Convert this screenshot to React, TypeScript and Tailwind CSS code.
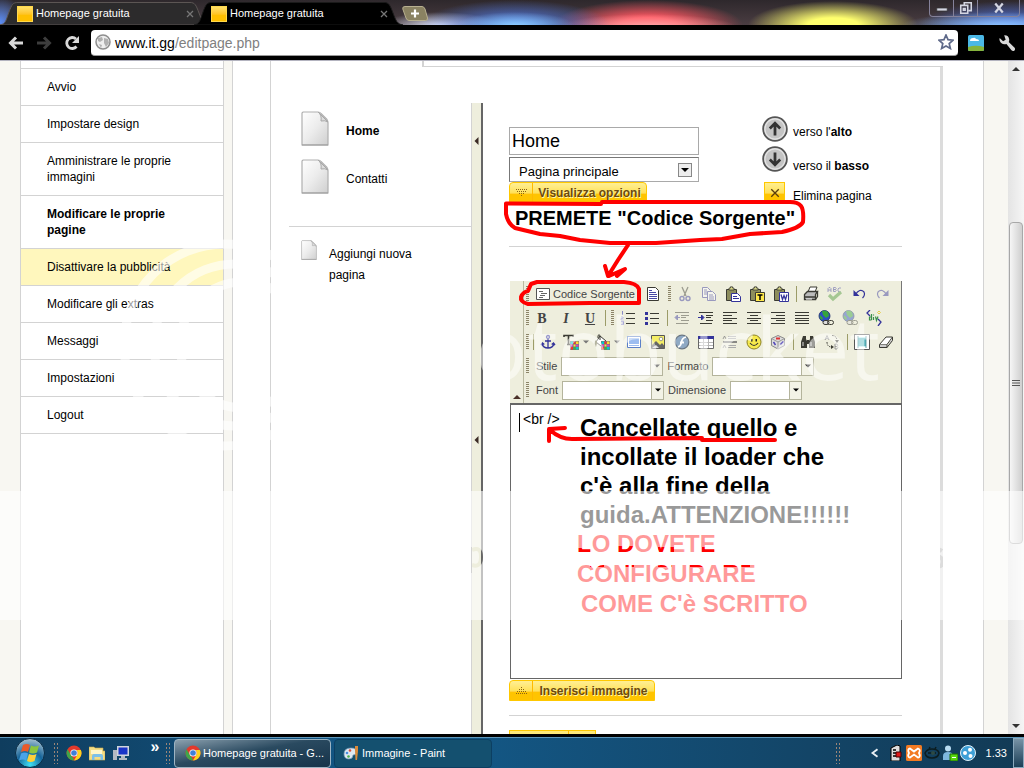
import type { ReactNode } from 'react';

const DARK = '#3a3a33';
const NAVY = '#33339a';

function Svg({ size = 'size-4', children }: { size?: string; children: ReactNode }) {
  return (
    <svg viewBox="0 0 16 16" className={`${size} shrink-0`} fill="none" aria-hidden="true">
      {children}
    </svg>
  );
}

/* ---------- browser chrome ---------- */

function Tab({ title, active = false }: { title: string; active?: boolean }) {
  return (
    <div className="relative flex h-full w-[194px] items-center gap-[3px] pl-[9px] pr-1 pt-0.5">
      <svg viewBox="0 0 210 25" className="absolute left-[-8px] top-0 h-[25px] w-[210px]" aria-hidden="true">
        <path
          d="M0 25 C6 24 6 20 9 12 C12 4 13 2.500 18 2.500 H190 C195 2.500 196 5 199 13 C202 21 203 24 209 25 Z"
          fill={active ? '#000' : '#2c2b2c'}
          stroke={active ? '#1a1a1a' : '#5c5654'}
        />
      </svg>
      <span className="relative size-4 shrink-0 border border-[#ffd84d] bg-linear-to-b from-[#ffe066] to-[#ffbf00] to-60%" />
      <button className="relative flex-1 text-left text-[11px] text-white">{title}</button>
      <button className="relative flex size-4 items-center justify-center" aria-label="Chiudi scheda">
        <Svg size="size-2">
          <path d="M2 2l12 12M14 2L2 14" stroke="#777" strokeWidth="2.500" />
        </Svg>
      </button>
    </div>
  );
}

function TabStrip() {
  return (
    <div className="flex h-[25px] shrink-0 items-start overflow-hidden bg-[radial-gradient(ellipse_60px_14px_at_515px_26px,#8fd0ff,transparent),radial-gradient(ellipse_95px_25px_at_515px_25px,#4d7df0,transparent),radial-gradient(ellipse_60px_14px_at_440px_26px,#e8ecff,transparent),radial-gradient(ellipse_90px_14px_at_648px_28px,#ffb0b0,transparent),radial-gradient(ellipse_95px_25px_at_648px_25px,#ff5560_30%,transparent),radial-gradient(ellipse_85px_24px_at_833px_25px,#ffff6e_30%,transparent),radial-gradient(ellipse_100px_14px_at_1000px_26px,#8fc4ff,transparent),radial-gradient(ellipse_90px_24px_at_1010px_25px,#4a74e8,transparent),radial-gradient(ellipse_24px_26px_at_0px_22px,#5b8df5,transparent),linear-gradient(#2e282c,#4a3d42)]">
      <div className="flex h-full pl-2">
        <Tab title="Homepage gratuita" />
        <Tab title="Homepage gratuita" active />
      </div>
      <button className="ml-1.5 mt-1.5" aria-label="Nuova scheda">
        <svg viewBox="0 0 26 15" className="h-[15px] w-[26px]" aria-hidden="true">
          <path d="M3 .5H20Q22 .5 23 3L25.500 12Q26 14.500 23.500 14.500H7Q5 14.500 4 12L.8 3Q.2 .5 3 .5Z" fill="#8a8262" stroke="#b8b090" />
          <path d="M13 3.500v8M9 7.500h8" stroke="#fff" strokeWidth="2.200" />
        </svg>
      </button>
      <div className="ml-auto mr-1 flex h-[17px] rounded-b-sm border border-t-0 border-[#85829a] text-[#d4d6e2]">
        <button className="flex w-6 items-center justify-center border-r border-[#85829a]" aria-label="Riduci">
          <Svg size="size-3"><path d="M1 8h14v4H1z" fill="currentColor" stroke="#333" /></Svg>
        </button>
        <button className="flex w-6 items-center justify-center border-r border-[#85829a]" aria-label="Ripristina">
          <Svg size="size-3.5"><path d="M6 5V2h8v9h-3M2 5h8v9H2zM5 8.500h2v2H5z" stroke="currentColor" strokeWidth="1.800" /></Svg>
        </button>
        <button className="flex w-[41px] items-center justify-center" aria-label="Chiudi">
          <Svg size="size-3"><path d="M3 2l10 12M13 2L3 14" stroke="currentColor" strokeWidth="3" /></Svg>
        </button>
      </div>
    </div>
  );
}

function AddressBar() {
  return (
    <div className="flex h-9 shrink-0 items-center border-b border-[#b3b3bf] bg-black pl-2 pr-2 text-[#d8d8d8]">
      <button aria-label="Indietro">
        <Svg><path d="M15 8H3M8 2.500L2.500 8L8 13.500" stroke="currentColor" strokeWidth="3" /></Svg>
      </button>
      <button className="ml-3 text-[#3d3d3d]" aria-label="Avanti">
        <Svg><path d="M1 8H13M8 2.500L13.500 8L8 13.500" stroke="currentColor" strokeWidth="3" /></Svg>
      </button>
      <button className="ml-3" aria-label="Ricarica">
        <Svg>
          <path d="M12.500 11.500A5.500 5.500 0 1 1 12 4" stroke="currentColor" strokeWidth="2.800" />
          <path d="M15 1v7H8z" fill="currentColor" />
        </Svg>
      </button>
      <div className="ml-[11px] flex h-[26px] flex-1 items-center rounded-sm border-b border-[#999] bg-white pl-1 pr-1">
        <Svg>
          <circle cx="8" cy="8" r="7" fill="#eee" stroke="#8e8e8e" strokeWidth="1.500" />
          <path d="M3 4l4-1 1 3-3 2-2-1zM9 4l4 1 1 4-3 4-2-4zM4 10l3 1-1 3z" fill="#b0b0b0" />
        </Svg>
        <div className="ml-1 flex-1 pt-0.5 text-[14px] text-[#808080]">
          <span className="text-black">www.it.gg</span>/editpage.php
        </div>
        <button aria-label="Aggiungi ai preferiti">
          <Svg><path d="M8 1l2 4.700 5 .5-3.800 3.300 1.200 5L8 12l-4.400 2.500 1.200-5L1 6.200l5-.5z" stroke="#5f6a8a" strokeWidth="1.700" /></Svg>
        </button>
      </div>
      <button className="ml-[10px]" aria-label="Estensione">
        <Svg>
          <rect width="16" height="16" rx="1.500" fill="#4bb8e6" />
          <path d="M2 6q0-3 3-3 2-1 3 1 3 0 3 2z" fill="#fff" />
          <path d="M0 12q8-2.500 16 0v2.500q0 1.500-1.500 1.500h-13Q0 16 0 14.500z" fill="#86b43c" />
        </Svg>
      </button>
      <button className="ml-3.5" aria-label="Impostazioni del browser">
        <Svg size="size-[18px]">
          <path d="M1.500 3.500L4.500 6.500L6.800 5L5.500 1.200Q9.500 1 10 5Q10 6.500 9.500 7L15 12.500Q15.500 14 14.500 14.800Q13 15.500 12 14.500L7.500 8.800Q3 9.800 1.500 6Q1 4.500 1.500 3.500Z" fill="currentColor" />
        </Svg>
      </button>
    </div>
  );
}

/* ---------- site navigation ---------- */

const NAV = [
  { label: 'Avvio' },
  { label: 'Impostare design' },
  { label: 'Amministrare le proprie immagini' },
  { label: 'Modificare le proprie pagine', style: 'font-bold' },
  { label: 'Disattivare la pubblicità', style: 'bg-[#fff7bd]' },
  { label: 'Modificare gli extras' },
  { label: 'Messaggi' },
  { label: 'Impostazioni' },
  { label: 'Logout' },
];

function Sidebar() {
  return (
    <nav className="w-[204px] shrink-0 border-x border-[#d3d3d3] bg-white">
      <ul className="mt-[7px] border-t border-[#d3d3d3]">
        {NAV.map((item) => (
          <li key={item.label} className="border-b border-[#d3d3d3]">
            <a href="#" className={`block py-2.5 pl-[26px] pr-8 leading-4 ${item.style ?? ''}`}>
              {item.label}
            </a>
          </li>
        ))}
      </ul>
    </nav>
  );
}

function PageIcon({ className }: { className: string }) {
  return (
    <svg viewBox="0 0 28 35" className={`${className} shrink-0`} aria-hidden="true">
      <defs>
        <linearGradient id="sheet" x1="0" y1="0" x2="1" y2="1">
          <stop offset="0" stopColor="#fff" />
          <stop offset=".5" stopColor="#ececec" />
          <stop offset="1" stopColor="#cfcfcf" />
        </linearGradient>
      </defs>
      <path d="M2 1H17Q19 1 20 2.500L26 8.500Q27 10 27 11.500V34H1V2Z" fill="url(#sheet)" stroke="#b0b0b0" strokeWidth="1.200" />
      <path d="M17 1Q21 4 20 10Q24 9 27 11Z" fill="#dcdcdc" stroke="#a8a8a8" />
      <path d="M1 34H27" stroke="#999" />
    </svg>
  );
}

function PageList() {
  return (
    <div className="w-[200px] shrink-0 pl-[18px] pt-11">
      <ul className="flex flex-col gap-[13px] pl-3">
        <li className="flex h-[35px] items-center gap-[17px]">
          <PageIcon className="h-[35px] w-7" />
          <a href="#" className="pt-1 font-bold">Home</a>
        </li>
        <li className="flex h-[35px] items-center gap-[17px]">
          <PageIcon className="h-[35px] w-7" />
          <a href="#" className="pt-1">Contatti</a>
        </li>
      </ul>
      <hr className="mt-8 border-[#d3d3d3]" />
      <a href="#" className="mt-[13px] flex gap-3 pl-3 leading-[21px]">
        <PageIcon className="h-5 w-4" />
        <span className="w-24 pt-1">Aggiungi nuova pagina</span>
      </a>
    </div>
  );
}

/* ---------- page form ---------- */

function YellowButton({ icon, label, width }: { icon: 'down' | 'up'; label: string; width: string }) {
  return (
    <button className={`flex h-[21px] rounded-t-sm border border-[#ffc800] bg-linear-to-b from-[#ffee8f] from-5% via-[#ffe25a] via-50% to-[#ffc400] to-60% ${width}`}>
      <span className="flex h-full w-[23px] items-center justify-center border-r border-[#ffb900]">
        <svg viewBox="0 0 11 8" className="h-2 w-[11px]" shapeRendering="crispEdges" aria-hidden="true">
          <path
            d={icon === 'down' ? 'M0 .5h11M1 2.500h9M3 4.500h5M5 6.500h1' : 'M5 .5h1M3 2.500h5M1 4.500h9M0 6.500h11'}
            stroke="#8a6414"
            strokeDasharray="1 1"
          />
        </svg>
      </span>
      <span className="flex-1 text-center text-[12px] font-bold leading-[21px] text-[#6b4a10] text-shadow-[1px_1px_0_#fff3a8]">{label}</span>
    </button>
  );
}

function RoundArrow({ down = false }: { down?: boolean }) {
  return (
    <Svg size="size-[26px]">
      <circle cx="8" cy="8" r="7.300" fill="#c4c4c4" stroke="#555" strokeWidth="1.100" />
      <circle cx="8" cy="8" r="6.200" stroke="#e4e4e4" strokeWidth=".7" />
      <path d={down ? 'M8 4v7.500M4.800 8.300L8 11.500l3.200-3.200' : 'M8 12V4.500M4.800 7.700L8 4.500l3.200 3.200'} stroke="#333" strokeWidth="1.700" />
    </Svg>
  );
}

function PageForm() {
  return (
    <div className="flex justify-between">
      <div className="w-[190px] pt-[11px]">
        <input
          aria-label="Nome della pagina"
          defaultValue="Home"
          className="block h-7 w-full border border-[#a9a9a9] px-0.5 text-[18px]"
        />
        <div className="relative mt-0.5">
          <select
            aria-label="Tipo di pagina"
            className="block h-[25px] w-full appearance-none border border-[#a9a9a9] border-l-[#777] border-t-[#777] bg-white pl-[9px] pt-1 text-[13px]"
          >
            <option>Pagina principale</option>
          </select>
          <span className="pointer-events-none absolute right-[7px] top-1.5 flex size-3.5 items-center justify-center border border-[#888] bg-[#eee]">
            <Svg size="size-2"><path d="M0 4h16L8 12z" fill="#000" /></Svg>
          </span>
        </div>
        <YellowButton icon="down" label="Visualizza opzioni" width="w-[138px]" />
      </div>
      <div className="flex w-[140px] flex-col leading-5">
        <button className="flex h-[26px] items-end gap-[5px]">
          <RoundArrow />
          <span>verso l'<b>alto</b></span>
        </button>
        <button className="mt-1 flex h-[30px] gap-[5px]">
          <RoundArrow down />
          <span className="self-end">verso il <b>basso</b></span>
        </button>
        <button className="mt-1.5 flex h-6 gap-2 pl-0.5">
          <span className="flex h-[21px] w-[21px] items-center justify-center border border-[#ffc800] bg-linear-to-b from-[#ffee8f] via-[#ffe25a] via-50% to-[#ffc400] to-60%">
            <Svg size="size-2.5"><path d="M2 2l12 12M14 2L2 14" stroke="#5a3d0c" strokeWidth="2.200" /></Svg>
          </span>
          <span className="self-end">Elimina pagina</span>
        </button>
      </div>
    </div>
  );
}

/* ---------- editor toolbar ---------- */

function Grip({ wide = false }: { wide?: boolean }) {
  return (
    <span className={`flex shrink-0 justify-center ${wide ? 'w-2' : 'w-1.5'}`}>
      <span className="h-4 w-[3px] bg-[repeating-linear-gradient(#8c8468_0_1px,#eeeedd_1px_2px)]" />
    </span>
  );
}

function Sep() {
  return (
    <span className="flex w-1.5 shrink-0 justify-center">
      <span className="h-4 w-px bg-[#9c9c68]" />
    </span>
  );
}

function Tool({ label, wide = false, dim = false, children }: { label: string; wide?: boolean; dim?: boolean; children: ReactNode }) {
  return (
    <button
      aria-label={label}
      className={`flex h-6 shrink-0 items-center justify-center ${wide ? 'w-[31px] gap-1' : 'w-6'} ${dim ? 'opacity-45' : ''}`}
    >
      <Svg>{children}</Svg>
      {wide && <Svg size="size-1.5"><path d="M0 4h16L8 12z" fill="#777" /></Svg>}
    </button>
  );
}

function Combo({ label, width, dim = false }: { label: string; width: string; dim?: boolean }) {
  return (
    <label className="flex items-center gap-1 text-[#444]">
      {label}
      <span className={`relative block ${width}`}>
        <select className="block h-[19px] w-full appearance-none border border-[#b4b49c] bg-white">
          <option></option>
        </select>
        <span className="pointer-events-none absolute bottom-px right-px top-px flex w-3 items-center justify-center border-l border-[#b4b49c] bg-[#f3f3e6]">
          <Svg size="size-1.5"><path d="M0 4h16L8 12z" fill={dim ? '#888' : '#000'} /></Svg>
        </span>
      </span>
    </label>
  );
}

const Clipboard = () => (
  <>
    <path d="M1.500 3.500h10v11h-10z" fill="#8d8d5c" stroke={DARK} />
    <path d="M4 4V2h1.500V.8h2V2H9v2z" fill="#d8d888" stroke={DARK} strokeWidth=".8" />
  </>
);

const Globe = () => (
  <>
    <circle cx="6.500" cy="6" r="5.500" fill="#2d4fc4" stroke="#1c2b66" strokeWidth=".8" />
    <path d="M4 1q4-1 6 1l1 4-3 2-3-3zM2 5l3 3-1 2q-3-2-2-5z" fill="#35a53c" />
    <rect x="5" y="10.500" width="6" height="4" rx="2" fill="#ddd" stroke={DARK} />
    <rect x="9.500" y="10.500" width="6" height="4" rx="2" stroke={DARK} />
  </>
);

const Swatches = () => (
  <>
    <path d="M7 7h9v9H7z" fill="#777" />
    <path d="M7.500 7.500h2.500v2.500H7.500zM13 13h2.500v2.500H13z" fill="#0cc" />
    <path d="M10.500 7.500h2v2.500h-2zM7.500 13h2.500v2.500H7.500z" fill="#e33" />
    <path d="M13 7.500h2.500v2.500H13zM10.500 10.500h2v2h-2z" fill="#fd3" />
    <path d="M7.500 10.500h2.500v2H7.500zM13 10.500h2.500v2H13z" fill="#c4c" />
    <path d="M10.500 13h2v2.500h-2z" fill="#3b4" />
  </>
);

function EditorToolbar() {
  return (
    <div className="flex h-[122px] overflow-hidden border-r border-[#777] bg-[#eeeedd] text-[11px]">
      <button aria-label="Comprimi la barra" className="flex w-[14px] shrink-0 items-end justify-center border-r border-[#b9b9a0] pb-0.5">
        <Svg size="size-2"><path d="M0 12h16L8 4z" fill="#4a3028" /></Svg>
      </button>
      <div className="flex flex-1 flex-col pt-px">
        <div className="flex h-6 items-center">
          <Grip />
          <button className="flex h-6 w-[111px] items-center gap-0.5 pl-[5px] text-[#444]">
            <Svg>
              <path d="M1.500 2.500h13v11h-13z" fill="#fff" stroke="#555" />
              <path d="M4 5.500h4M6 7.500h6M5 9.500h5M4 11.500h4" stroke="#555" strokeWidth=".9" />
            </Svg>
            Codice Sorgente
          </button>
          <Tool label="Modelli">
            <path d="M2.500 1.500h8l3 3v10h-11z" fill="#fff" stroke={DARK} />
            <path d="M4 4.500h3M4 6.500h7M4 8.500h8M4 10.500h8M4 12.500h8" stroke={NAVY} strokeWidth=".9" />
          </Tool>
          <Grip wide />
          <Tool label="Taglia" dim>
            <path d="M5 1l4 9M11 1L7 10" stroke={DARK} strokeWidth="1.300" />
            <circle cx="5" cy="12.500" r="2" stroke={NAVY} strokeWidth="1.400" />
            <circle cx="11" cy="12.500" r="2" stroke={NAVY} strokeWidth="1.400" />
          </Tool>
          <Tool label="Copia" dim>
            <path d="M1.500 1.500h5l3 3v7h-8z" fill="#fff" stroke={NAVY} />
            <path d="M6.500 5.500h5l3 3v6h-8z" fill="#fff" stroke={NAVY} />
            <path d="M8 9h4M8 11h5M8 13h5M3 4h3M3 6h3M3 8h3" stroke={NAVY} />
          </Tool>
          <Tool label="Incolla">
            <Clipboard />
            <path d="M6.500 7.500h6l3 3v5h-9z" fill="#fff" stroke={NAVY} />
            <path d="M8 10.500h4M8 12.500h6" stroke={NAVY} />
          </Tool>
          <Tool label="Incolla come testo">
            <Clipboard />
            <path d="M6.500 6.500h9v9h-9z" fill="#ffe84a" stroke={DARK} />
            <path d="M8.500 9h5M11 9v5" stroke="#000" strokeWidth="1.500" />
          </Tool>
          <Tool label="Incolla da Word">
            <Clipboard />
            <path d="M6.500 6.500h9v9h-9z" fill="#fff" stroke={NAVY} />
            <path d="M8 8.500l1.500 5L11 9.500l1.500 4 1.500-5" stroke={NAVY} strokeWidth="1.300" />
          </Tool>
          <Sep />
          <Tool label="Stampa">
            <path d="M5 6l2-5h7l-2 5z" fill="#fff" stroke={DARK} />
            <path d="M1.500 8.500l3-3h10l-2 3v5h-11z" fill="#bbb" stroke={DARK} strokeWidth="1.300" />
            <path d="M12.500 13.500l2-3v-5M2 11h10" stroke={DARK} strokeWidth="1.300" />
            <path d="M3 13h6" stroke="#fff" />
          </Tool>
          <Tool label="Correttore ortografico" dim>
            <path d="M1 6V2.500l1-1h1l1 1V6M1 4h3M6.500 1.500v4h2l.7-1-.7-1h-2 2l.7-1-.7-1zM14 2h-2l-1 1v2l1 1h2" stroke={NAVY} strokeWidth=".9" />
            <path d="M2 9l4 4 8-7" stroke="#4d9a3a" strokeWidth="3.200" />
          </Tool>
          <Tool label="Annulla">
            <path d="M4 9Q9 1.500 13 6Q14.500 9 11.500 12" stroke={NAVY} strokeWidth="1.200" />
            <path d="M2.500 4v6h6z" fill={NAVY} />
          </Tool>
          <Tool label="Ripristina" dim>
            <path d="M12 9Q7 1.500 3 6Q1.500 9 4.500 12" stroke={NAVY} strokeWidth="1.200" />
            <path d="M13.500 4v6h-6z" fill={NAVY} />
          </Tool>
        </div>

        <div className="flex h-6 items-center">
          <Grip />
          <button aria-label="Grassetto" className="w-6 text-center font-[Liberation_Serif,serif] text-[14px] font-bold text-[#444]">B</button>
          <button aria-label="Corsivo" className="w-6 text-center font-[Liberation_Serif,serif] text-[14px] font-bold italic text-[#444]">I</button>
          <button aria-label="Sottolineato" className="w-6 text-center font-[Liberation_Serif,serif] text-[14px] font-bold text-[#444] underline">U</button>
          <Sep />
          <Grip wide />
          <Tool label="Elenco numerato">
            <path d="M6 3.500h9M6 8.500h9M6 13.500h9" stroke={DARK} />
            <path d="M2.500 1v4M1 7h2v1.500H1V10h2.500M1 11.500h2.500v3H1M1.500 13h2" stroke="#7d7dc4" strokeWidth=".9" />
          </Tool>
          <Tool label="Elenco puntato">
            <path d="M6 3.500h9M6 8.500h9M6 13.500h9" stroke={DARK} />
            <path d="M1 2h3v3H1zM1 7h3v3H1zM1 12h3v3H1z" fill={NAVY} />
          </Tool>
          <Sep />
          <Tool label="Riduci rientro" dim>
            <path d="M1 2.500h14M7 5.500h8M7 7.500h5M7 10.500h8M2 13.500h12" stroke={DARK} />
            <path d="M6 7.500H2M3.500 5v5L1 7.500z" fill={NAVY} stroke={NAVY} />
          </Tool>
          <Tool label="Aumenta rientro">
            <path d="M1 2.500h14M8 5.500h7M8 7.500h5M8 10.500h7M2 13.500h12" stroke={DARK} />
            <path d="M0 7.500h4M3.500 5v5L6 7.500z" fill={NAVY} stroke={NAVY} />
          </Tool>
          <Tool label="Allinea a sinistra">
            <path d="M1 2.500h14M1 5.500h9M1 8.500h14M1 10.500h9M1 13.500h14" stroke={DARK} />
          </Tool>
          <Tool label="Centra">
            <path d="M1 2.500h14M4 5.500h8M1 8.500h14M4 10.500h8M1 13.500h14" stroke={DARK} />
          </Tool>
          <Tool label="Allinea a destra">
            <path d="M1 2.500h14M6 5.500h9M1 8.500h14M6 10.500h9M1 13.500h14" stroke={DARK} />
          </Tool>
          <Tool label="Giustifica">
            <path d="M1 2.500h14M1 5.500h14M1 8.500h14M1 10.500h14M1 13.500h14" stroke={DARK} />
          </Tool>
          <Tool label="Collegamento"><Globe /></Tool>
          <Tool label="Rimuovi collegamento" dim><Globe /></Tool>
          <Tool label="Contenitore div">
            <path d="M4 0L1 3l3 3M12 9l3 3-3 4" stroke={NAVY} strokeWidth="1.300" />
            <path d="M5.500 4v6M5.500 7h-2v3h2M7.500 7v3M7.500 4.500v1M9.500 6.500l1 4 1.500-4" stroke="#3a8f4a" strokeWidth="1.200" />
            <path d="M13 1l1.500 1.500L13 4l-1.500-1.500z" stroke="#e6cf4a" />
          </Tool>
        </div>

        <div className="flex h-6 items-center">
          <Grip />
          <Sep />
          <Tool label="Ancora">
            <circle cx="8" cy="3" r="1.500" stroke={NAVY} strokeWidth="1.300" />
            <path d="M8 4.500V14M5 7h6M2 9.500q1 4.500 6 4.500 5 0 6-4.500M1 11l1.500-2 1.800 1.500M15 11l-1.500-2-1.800 1.500" stroke={NAVY} strokeWidth="1.300" />
          </Tool>
          <Tool label="Colore del testo" wide>
            <path d="M1 3V1.500h9V3M5.500 1.500V10M4 10.500h3" stroke={DARK} strokeWidth="1.600" />
            <Swatches />
          </Tool>
          <Tool label="Colore dello sfondo" wide>
            <path d="M6 2l6 5-5 5-5-4z" fill="#fff" stroke={DARK} />
            <path d="M6 6V1.500Q5 0 4 1.500V4" stroke={DARK} />
            <path d="M1 7q2-2 2 2l-1 4q-2-3-1-6z" fill="#6b6b40" />
            <Swatches />
          </Tool>
          <Tool label="Modulo">
            <path d="M1.500 2.500h13v11h-13z" fill="#fff" stroke="#5c80c8" />
            <path d="M3 4h10v6H3z" fill="#9cbdf0" />
            <path d="M3 11.500h10" stroke="#9cbdf0" />
          </Tool>
          <Tool label="Immagine">
            <path d="M1.500 1.500h13v13h-13z" fill="#f5ee66" stroke="#555" />
            <path d="M2 11l4-4 4 4 2-2 2.500 3v2.500H2z" fill="#666" />
            <path d="M2 14l4-3 3 3z" fill="#ddd" />
            <circle cx="11" cy="5" r="1.800" fill="#fff" stroke="#998" />
          </Tool>
          <Tool label="Oggetto Flash">
            <circle cx="8" cy="8" r="6.800" fill="#8fa9c4" stroke="#6c7885" strokeWidth="1.200" />
            <path d="M12 3Q8 4 7.500 8Q7 12 4 13M6 8.500h4" stroke="#fff" strokeWidth="1.800" />
          </Tool>
          <Tool label="Tabella">
            <path d="M.5 2.500h15v12H.5z" fill="#fff" stroke="#666" />
            <path d="M0 2h16v3H0z" fill={NAVY} />
            <path d="M1 8.500h14M1 11.500h14M5.500 5v9M10.500 5v9" stroke="#b5b5b5" />
          </Tool>
          <Tool label="Linea orizzontale">
            <path d="M1 5l1.500-3L4 5M1 14l1.500-3L4 14" stroke="#888" strokeWidth=".8" />
            <path d="M6 2.500h8M6 4.500h8M6 11.500h8M6 13.500h8" stroke="#aaa" />
            <path d="M1 8h14" stroke="#666" strokeWidth="1.500" />
          </Tool>
          <Tool label="Emoticon">
            <circle cx="8" cy="8" r="7" fill="#f6e94c" stroke="#8d8325" />
            <path d="M4 9q4 5 8 0" stroke="#333" strokeWidth="1.200" />
            <path d="M5 5h1.500v2.500H5zM9.500 5H11v2.500H9.500z" fill="#222" />
          </Tool>
          <Tool label="Caratteri speciali">
            <path d="M8 1.500l6.500 3v7L8 15l-6.500-3.500v-7z" fill="#ddd" stroke="#888" />
            <path d="M1.500 4.500L8 8l6.500-3.500M8 8v7" stroke="#999" />
            <path d="M6 3.500h4v2H6z" fill="#d33" />
            <path d="M3.500 8l2 3M10.500 10.500l3-3" stroke="#5044b8" strokeWidth="1.500" />
          </Tool>
          <Sep />
          <Tool label="Trova">
            <path d="M3 2h3v3l1 2v7H1V8zM10 2h3l2 6v6H9V7l1-2zM7 6h2v4H7z" fill={DARK} />
            <path d="M3 8v4M11 8v4" stroke="#ddd" />
          </Tool>
          <Tool label="Sostituisci">
            <path d="M1 6l2-4.500L5 6M1.800 4.500h2.400M11 10v5h2l1-1.200-1-1.300h-2 2l.7-1-.7-1.500z" stroke="#999" />
            <path d="M8 1.500q5 0 5 6M3 8q0 5 5 5" stroke={DARK} strokeDasharray="1.500 1" />
            <path d="M11 6h4l-2 3zM7 11v4l3-2z" fill={DARK} />
          </Tool>
          <Sep />
          <Tool label="Seleziona tutto">
            <path d="M.5 .5h15v15H.5z" fill="#fff" stroke="#555" />
            <path d="M4 3.500h8v9H4z" fill="#7edfe6" />
            <path d="M4 5h8M4 7h8M4 9h8M4 11h8M4 2v12M12 2v12" stroke="#3a8790" strokeWidth=".8" />
          </Tool>
          <Tool label="Rimuovi formattazione">
            <path d="M1.500 10.500L8 3h6.500L9 10.500z" fill="#fff" stroke={DARK} />
            <path d="M1.500 10.500v3H9v-3M9 13.500l5.500-7V3" fill="#ccc" stroke={DARK} />
          </Tool>
        </div>

        <div className="flex h-6 items-center">
          <Grip />
          <div className="flex gap-1 pl-1.5">
            <Combo label="Stile" width="w-[102px]" dim />
            <Combo label="Formato" width="w-[102px]" />
          </div>
        </div>
        <div className="flex h-6 items-center">
          <Grip />
          <div className="flex gap-1 pl-1.5">
            <Combo label="Font" width="w-[102px]" />
            <Combo label="Dimensione" width="w-[72px]" />
          </div>
        </div>
      </div>
    </div>
  );
}

function Editor() {
  return (
    <div className="min-w-0 flex-1 pl-[26px] pr-[38px] pt-[49px]">
      <PageForm />
      <hr className="mt-10 border-[#d3d3d3]" />
      <div className="ml-px mt-[34px]">
        <EditorToolbar />
        <div className="relative">
          <textarea
            aria-label="Codice sorgente della pagina"
            defaultValue="<br />"
            className="block h-[276px] w-full resize-none border border-t-2 border-[#666] pl-3 pt-1.5 text-[14px] leading-4"
          />
          {/* text cursor */}
          <span className="absolute left-[9px] top-2.5 h-[19px] w-px bg-black" />
        </div>
      </div>
      <div className="mt-px">
        <YellowButton icon="up" label="Inserisci immagine" width="w-[146px]" />
      </div>
      <hr className="mt-3.5 border-[#d3d3d3]" />
      <button aria-label="Salva" className="mt-3.5 flex h-[21px] w-[87px] border border-[#ffc800] bg-[#ffe97a]">
        <span className="h-full w-[59px] border-r border-[#ffb900]" />
      </button>
    </div>
  );
}

function SplitterArrow() {
  return <Svg size="size-2"><path d="M11 0v16L3 8z" fill="#3a2a24" /></Svg>;
}

function Scrollbar() {
  return (
    <div className="flex w-4 shrink-0 flex-col items-center bg-linear-to-r from-[#e4e4e4] to-[#f5f5f5] py-1">
      <Svg size="size-2"><path d="M0 12h16L8 4z" fill="#333" /></Svg>
      <div className="mt-[149px] flex h-[322px] w-3.5 items-center justify-center rounded-sm border border-[#a8a8a8] bg-linear-to-r from-[#f6f6f6] to-[#cfcfcf]">
        <Svg size="size-2"><path d="M0 3h16M0 8h16M0 13h16" stroke="#555" strokeWidth="2" /></Svg>
      </div>
      <div className="mt-auto">
        <Svg size="size-2"><path d="M0 4h16L8 12z" fill="#333" /></Svg>
      </div>
    </div>
  );
}

function Page() {
  return (
    <div className="flex min-h-0 flex-1 overflow-hidden bg-[#f8f7f2] pl-5 text-[12px] text-black">
      <Sidebar />
      <main className="ml-2 flex min-w-0 flex-1 border-x border-[#d3d3d3] bg-white pl-[37px] pr-10">
        <div className="flex min-w-0 flex-1 flex-col border-l border-[#d3d3d3]">
          <div className="ml-[151px] h-1.5 shrink-0 border-b border-l-2 border-[#d3d3d3]" />
          <div className="flex min-h-0 flex-1 border-r-[3px] border-[#dcdcdc]">
            <PageList />
            <div className="mt-9 flex w-3 shrink-0 flex-col items-center gap-[291px] border-l border-r-2 border-l-[#d3d3d3] border-r-[#666] bg-[#eeeedd] pt-[34px]">
              <SplitterArrow />
              <SplitterArrow />
            </div>
            <Editor />
          </div>
        </div>
      </main>
      <div className="w-6 shrink-0" />
      <Scrollbar />
    </div>
  );
}

/* ---------- notes drawn over the page ---------- */

function Notes() {
  return (
    <div className="pointer-events-none absolute inset-0 overflow-hidden font-bold text-black">
      <p className="absolute left-[515px] top-[206px] text-[20px] leading-6">PREMETE "Codice Sorgente"</p>
      <p className="absolute left-[580px] top-[413px] w-[275px] text-[24px] leading-[29px]">
        Cancellate quello e incollate il loader che c'è alla fine della guida.ATTENZIONE!!!!!!
      </p>
      <p className="absolute left-[577px] top-[529px] w-[260px] text-[24px] leading-[30px] text-[#f00]">
        LO DOVETE<br />CONFIGURARE<br />
        <span className="pl-1">COME C'è SCRITTO</span>
      </p>
      <svg viewBox="0 0 1024 768" className="absolute left-0 top-0 h-[768px] w-[1024px]" fill="none" stroke="#f00" strokeWidth="4" strokeLinecap="round" strokeLinejoin="round" aria-hidden="true">
        <path d="M601 204L506 203.500L506 214Q508 224 515 228L540 234L560 236L580 240L610 243H656L700 240L722 239L750 234L782 232Q800 228 803 222Q804 210 801 206Q798 202 790 202H602" />
        <path d="M628 245L618 260L608 276L605 266M609 276L625 269L617 276" />
        <path d="M537 282H624Q637 283 639 289L639 303H590L528 304Q520 302 521 297Q523 292 528 291L531 284Z" />
        <path d="M565 428L549 429V441M550 430Q560 439 572 439L702 438M702 440H775" />
      </svg>
    </div>
  );
}

function Watermark() {
  return (
    <div className="pointer-events-none absolute inset-0 overflow-hidden">
      <svg viewBox="0 0 1024 768" className="absolute left-0 top-0 h-[768px] w-[1024px]" fill="none" aria-hidden="true">
        <g stroke="#fff" strokeOpacity=".6" strokeWidth="9">
          <circle cx="225" cy="345" r="101" />
          <circle cx="235" cy="345" r="81" />
          <circle cx="243" cy="345" r="63" />
        </g>
        <mask id="caption">
          <rect x="0" y="491" width="1024" height="129" fill="#fff" />
          <path d="M578 548h12v6h-12zM618 546h16v8h-16zM658 547h16v7h-16zM684 548h5v6h-5zM702 547h12v7h-12zM590 563h14v4h-14zM622 564h12v3h-12zM658 563h14v4h-14zM690 564h20v3h-20zM722 563h28v4h-28z" fill="#000" />
          <path d="M470 547v26M472 550q9-4 9 7t-9 8" stroke="#000" strokeWidth="4" />
          <path d="M942 551q-6-4-6 1 0 3 4 5t2 8q-3 3-7 0" stroke="#000" strokeWidth="4" />
        </mask>
        <rect x="0" y="491" width="1024" height="129" fill="#fff" fillOpacity=".6" mask="url(#caption)" />
      </svg>
      <span className="absolute right-[144px] top-[291px] font-[Open_Sans,sans-serif] text-[86px] leading-[112px] text-white/50">photobucket</span>
    </div>
  );
}

/* ---------- taskbar ---------- */

function ChromeLogo() {
  return (
    <Svg>
      <circle cx="8" cy="8" r="7.500" fill="#e3392b" />
      <path d="M1.500 4.300L5.500 11Q8 13 8 15.500A7.500 7.500 0 0 1 1.500 4.300Z" fill="#3fa648" />
      <path d="M8 15.500L11.500 9.500Q12 6 10.500 5H14.900A7.500 7.500 0 0 1 8 15.500Z" fill="#fcd21e" />
      <circle cx="8" cy="8" r="3.600" fill="#fff" />
      <circle cx="8" cy="8" r="2.800" fill="#3f7fd8" />
    </Svg>
  );
}

function TaskGrip({ className }: { className: string }) {
  return <span className={`h-[22px] w-[5px] shrink-0 bg-[radial-gradient(#9a8578_1px,transparent_1px)] bg-size-[3px_4px] ${className}`} />;
}

function Taskbar() {
  return (
    <div className="flex h-[34px] shrink-0 items-stretch border-t-2 border-black bg-[#3c3c4a] pt-px text-[11px] text-white">
      <div className="flex flex-1 items-center border-t border-[#5f97ba] bg-linear-to-r from-[#0f3d5e] via-[#135a8a] via-40% to-[#123a55] shadow-[0_-1px_0_#000]">
        <button aria-label="Start" className="ml-3.5 h-[30px] w-8">
          <svg viewBox="0 0 32 30" className="h-[30px] w-8" aria-hidden="true">
            <defs>
              <radialGradient id="orb" cx=".5" cy=".9" r=".9">
                <stop offset="0" stopColor="#3fe0f5" />
                <stop offset=".5" stopColor="#17659a" />
                <stop offset="1" stopColor="#a9c3d2" />
              </radialGradient>
            </defs>
            <circle cx="16" cy="15" r="14.500" fill="url(#orb)" stroke="#0a2c44" />
            <path d="M9 7q4-2 7 0l-2 7q-3-2-7 0z" fill="#ea5a2a" />
            <path d="M17 7.500q4 2 8 0l-2 7q-4 2-8 0z" fill="#8cc63e" />
            <path d="M7 15.500q4-2 7 0l-2 7q-3-2-7 0z" fill="#4aa3e8" />
            <path d="M15 16q4 2 7.500 0l-2 7q-4 2-7.500 0z" fill="#fccf3a" />
          </svg>
        </button>
        <TaskGrip className="ml-[7px]" />
        <button aria-label="Chrome" className="ml-2"><ChromeLogo /></button>
        <button aria-label="Esplora risorse" className="ml-[7px]">
          <Svg>
            <path d="M0 2h5l1 1h8v3h2v9H0z" fill="#f3dd86" stroke="#c9a94a" strokeWidth=".6" />
            <path d="M2 5h11v4H2z" fill="#fff6c9" />
            <path d="M3 15v-4q0-2 2-2h7q2 0 2 2v4h-2.500v-3h-6v3z" fill="#7cc0ea" />
          </Svg>
        </button>
        <button aria-label="Mostra desktop" className="ml-2">
          <Svg>
            <path d="M4 1h12v10H4z" fill="#d0d4dc" />
            <path d="M5.500 2.500h9v7h-9z" fill="#1a34c8" />
            <path d="M8 11h4v2h2v2H6v-2h2zM0 5h4v10H0z" fill="#b3b8c2" />
          </Svg>
        </button>
        <button aria-label="Altre icone" className="mb-3 ml-5 w-3 text-[16px] font-bold leading-4">»</button>
        <TaskGrip className="ml-1" />
        <button className="ml-1 flex h-[29px] w-[157px] items-center gap-0.5 rounded-sm border border-[#9db4c3] bg-linear-to-br from-[#8ba0ae] via-[#2a4a60] via-45% to-[#16334a] pl-2.5">
          <ChromeLogo />
          <span>Homepage gratuita - G...</span>
        </button>
        <button className="ml-[3px] flex h-[29px] w-[158px] items-center gap-[3px] rounded-sm border border-[#0c3f62] bg-[#14506f] pl-2">
          <Svg>
            <path d="M1 9q0-6 7-6 6 0 6 5-1 2-4 2 0 4-4 4-5 0-5-5z" fill="#dfe9f2" stroke="#7a9bb8" strokeWidth=".7" />
            <circle cx="4" cy="8" r="1.300" fill="#4a8fe0" />
            <circle cx="7" cy="5.500" r="1.300" fill="#e0503a" />
            <circle cx="5.500" cy="11.500" r="1.300" fill="#4cae4a" />
            <path d="M12 1h3v5l-1 9h-1.500L12 6z" fill="#d98a3a" />
          </Svg>
          <span>Immagine - Paint</span>
        </button>
        <TaskGrip className="ml-auto" />
        <button aria-label="Mostra icone nascoste" className="ml-[30px]">
          <Svg size="size-2.5"><path d="M12 2L4 8l8 6" stroke="#e8eef3" strokeWidth="3" /></Svg>
        </button>
        <div className="ml-2 flex gap-0.5">
          <Svg>
            <path d="M3 3l6-3 3 1v15H3z" fill="#ddd" stroke="#000" />
            <path d="M5 5h3M5 8h3M5 11h3" stroke="#000" strokeWidth="1.500" />
            <path d="M8 7h5v5H8z" fill="#e01818" stroke="#400" />
          </Svg>
          <Svg>
            <rect width="16" height="16" rx="1.500" fill="#f27a22" />
            <path d="M4 3.500l4 3 4-3q3 1 1 4.500 2 4-1 4.500l-4-3-4 3Q1 12 3 8 1 4 4 3.500z" stroke="#fff" strokeWidth="1.800" />
          </Svg>
          <Svg>
            <path d="M1 8q2-4 7-4 6 0 7 4-1 5-7 5-6 0-7-5zM5 4l1-2M11 4l1-2M4 8h8" stroke="#0c1d20" strokeWidth="1.500" />
            <circle cx="9" cy="8" r="2" fill="#2c4a44" />
          </Svg>
          <Svg>
            <circle cx="6" cy="3.500" r="3" fill="#b8dcf2" />
            <path d="M1 15V11q0-4 5-4t5 4v4z" fill="#7db8e0" />
            <path d="M8 9h8v7H8z" fill="#57d60c" stroke="#1c6a04" />
            <path d="M10 12.500h4" stroke="#fff" />
          </Svg>
          <Svg>
            <circle cx="8" cy="8" r="7.500" fill="#3d9fd6" stroke="#e3f2fa" />
            <circle cx="5" cy="8" r="2" fill="#fff" />
            <circle cx="10" cy="4.800" r="2" fill="#fff" />
            <circle cx="10.500" cy="11" r="2" fill="#fff" />
          </Svg>
        </div>
        <span className="ml-2.5">1.33</span>
        <button aria-label="Desktop" className="ml-1.5 h-full w-[11px] border border-[#8aa9bd] bg-linear-to-b from-[#7793a6] to-[#1b4058]" />
      </div>
    </div>
  );
}

export default function App() {
  return (
    <div className="relative flex h-screen flex-col overflow-hidden bg-black font-[Liberation_Sans,Arial,sans-serif]">
      <TabStrip />
      <AddressBar />
      <Page />
      <Taskbar />
      <Notes />
      <Watermark />
    </div>
  );
}
